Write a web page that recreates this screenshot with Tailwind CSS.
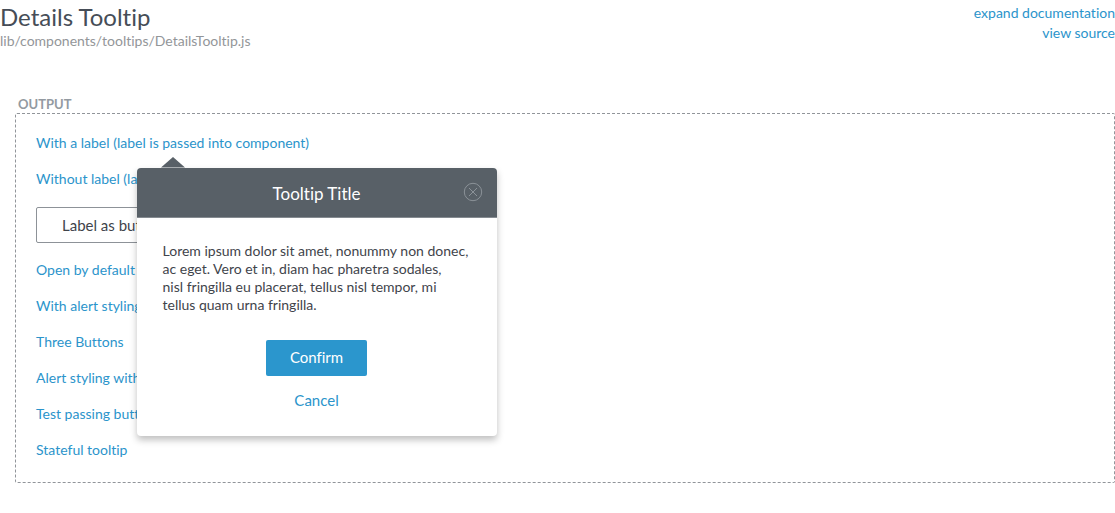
<!DOCTYPE html>
<html lang="en">
<head>
<meta charset="utf-8">
<title>Details Tooltip</title>
<script src="https://cdn.jsdelivr.net/npm/@tailwindcss/browser@4"></script>
</head>
<body class="bg-white font-['Lato','Liberation_Sans',sans-serif] text-sm text-[#3f444b] [font-variant-ligatures:none]">
<header class="flex items-start justify-between">
  <div>
    <h1 class="text-2xl leading-[34px] text-[#464d57]">Details Tooltip</h1>
    <p class="text-sm leading-[14px] text-[#939699]">lib/components/tooltips/DetailsTooltip.js</p>
  </div>
  <nav class="flex flex-col items-end pt-[3px] leading-5 text-[#2b94cb]">
    <a href="#documentation">expand documentation</a>
    <a href="#source">view source</a>
  </nav>
</header>
<main class="mt-12 pl-[15px]">
  <h2 class="pl-[3px] text-[13px] leading-[17px] font-bold text-[#939aa1]">OUTPUT</h2>
  <section class="flex flex-col items-start gap-4 rounded-xs border border-dashed border-[#91959a] px-5 pt-[19px] pb-[22px] leading-5 text-[#2b94cb]">
    <div class="relative">
      <a href="#label">With a label (label is passed into component)</a>
      <div role="dialog" aria-labelledby="tip-title" class="absolute top-[35px] left-1/2 z-10 -ml-9 w-[360px] rounded-sm bg-white text-[#3f444b] shadow-[0_4px_7px_rgba(0,0,0,0.25)]">
        <svg class="absolute -top-[11px] left-6 h-[11px] w-6" viewBox="0 0 24 11" aria-hidden="true"><path d="M12 0L24 10.500H0z" fill="#586067"/></svg>
        <div class="relative flex h-[50px] items-center justify-center rounded-t-sm border-b border-[#858b91] bg-[#586067] pt-0.5">
          <h3 id="tip-title" class="text-[17px] text-white">Tooltip Title</h3>
          <button type="button" aria-label="Close" class="absolute top-3.5 right-3.5">
            <svg class="size-5" viewBox="0 0 20 20" fill="none" stroke="#8b9298" aria-hidden="true"><circle cx="10" cy="10" r="8.700"/><path d="M6 6l8 8M14 6l-8 8"/></svg>
          </button>
        </div>
        <p class="px-[26px] pt-6 text-sm leading-[18px]">Lorem ipsum dolor sit amet, nonummy non donec,<br>ac eget. Vero et in, diam hac pharetra sodales,<br>nisl fringilla eu placerat, tellus nisl tempor, mi<br>tellus quam urna fringilla.</p>
        <div class="flex flex-col items-center gap-3.5 pt-[26px] pb-[26px]">
          <button type="button" class="h-9 w-[101px] rounded-xs bg-[#2b96cd] pb-0.5 text-[15px] text-white">Confirm</button>
          <button type="button" class="leading-5 text-[15px] text-[#2b94cb]">Cancel</button>
        </div>
      </div>
    </div>
    <a href="#no-label">Without label (label is set)</a>
    <button type="button" class="mt-0.5 mb-px h-9 rounded-xs border border-[#8d9298] px-[25px] text-[15px] text-[#3f444b]">Label as button</button>
    <a href="#open">Open by default</a>
    <a href="#alert">With alert styling</a>
    <a href="#three">Three Buttons</a>
    <a href="#alert-buttons">Alert styling with buttons</a>
    <a href="#passing">Test passing buttons</a>
    <a href="#stateful">Stateful tooltip</a>
  </section>
</main>
</body>
</html>
